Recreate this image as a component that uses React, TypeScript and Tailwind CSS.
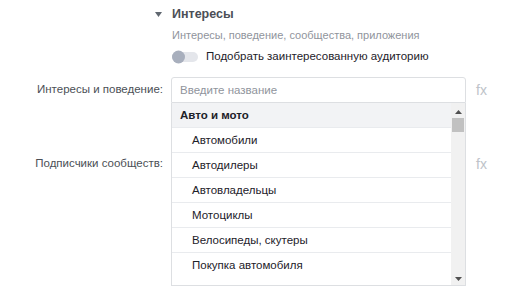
const ITEMS = [
  'Автомобили',
  'Автодилеры',
  'Автовладельцы',
  'Мотоциклы',
  'Велосипеды, скутеры',
  'Покупка автомобиля',
];

function Fx() {
  return <span className="ml-[10px] text-[14px] leading-[26px] text-[#bec3c9]">fx</span>;
}

/** Dropdown with categories, shown over the form below the input. */
function CategoryList() {
  return (
    <div className="absolute left-0 top-full z-10 flex h-[183px] w-full overflow-hidden border-x border-b border-[#dddfe2] bg-white">
      <ul className="min-w-0 flex-1">
        <li className="h-[24px] bg-[#f2f3f5] pl-[8px] text-[11.5px] font-bold leading-[24px] text-[#1d2129]">
          Авто и мото
        </li>
        {ITEMS.map((item) => (
          <li
            key={item}
            className="h-[25px] border-t border-[#e9ebee] pl-[20px] text-[11.5px] leading-[24px] text-[#1d2129]"
          >
            {item}
          </li>
        ))}
      </ul>
      {/* Scrollbar */}
      <div className="flex w-[14px] shrink-0 flex-col items-center bg-[#f1f1f1]">
        <svg width="7" height="4" viewBox="0 0 7 4" className="mt-[7px]">
          <path d="M0 4 L3.5 0 L7 4 Z" fill="#505050" />
        </svg>
        <div className="mt-[4px] h-[14px] w-[12px] bg-[#c1c1c1]" />
        <svg width="7" height="4" viewBox="0 0 7 4" className="mb-[4px] mt-auto">
          <path d="M0 0 L7 0 L3.5 4 Z" fill="#505050" />
        </svg>
      </div>
    </div>
  );
}

export default function App() {
  return (
    <div
      className="h-[290px] w-[516px] overflow-hidden bg-white"
      style={{ fontFamily: '"Liberation Sans", Arial, sans-serif' }}
    >
      <div className="pl-[155px] pt-[5px]">
        <div className="flex h-[18px] items-center">
          <svg width="7" height="5" viewBox="0 0 7 5">
            <path d="M0 0 L7 0 L3.5 5 Z" fill="#606770" />
          </svg>
          <span className="ml-[10px] text-[12.5px] font-bold leading-[18px] text-[#4b4f56]">Интересы</span>
        </div>
        <div className="mt-[3px] pl-[17px] text-[11px] leading-[18px] text-[#90949c]">
          Интересы, поведение, сообщества, приложения
        </div>
        <div className="mt-[5px] flex h-[16px] items-center pl-[17px]">
          <div className="relative h-[10px] w-[26px] rounded-full bg-[#e4e6eb]">
            <div className="absolute left-0 top-1/2 h-[13px] w-[13px] -translate-y-1/2 rounded-full bg-[#a8afbd]" />
          </div>
          <span className="ml-[8px] text-[11.5px] text-[#1d2129]">Подобрать заинтересованную аудиторию</span>
        </div>
      </div>

      <div className="mt-[12px] flex items-center">
        <div className="w-[171px] pr-[8px] text-right text-[11.5px] text-[#4b4f56]">Интересы и поведение:</div>
        <div className="relative w-[295px]">
          <div className="h-[26px] rounded-t-[3px] border border-[#dddfe2] pl-[8px] text-[11.5px] leading-[24px] text-[#90949c]">
            Введите название
          </div>
          <CategoryList />
        </div>
        <Fx />
      </div>

      <div className="mt-[48px] flex items-center">
        <div className="w-[171px] pr-[8px] text-right text-[11.5px] text-[#4b4f56]">Подписчики сообществ:</div>
        <div className="h-[26px] w-[295px] border border-[#dddfe2]" />
        <Fx />
      </div>
    </div>
  );
}
